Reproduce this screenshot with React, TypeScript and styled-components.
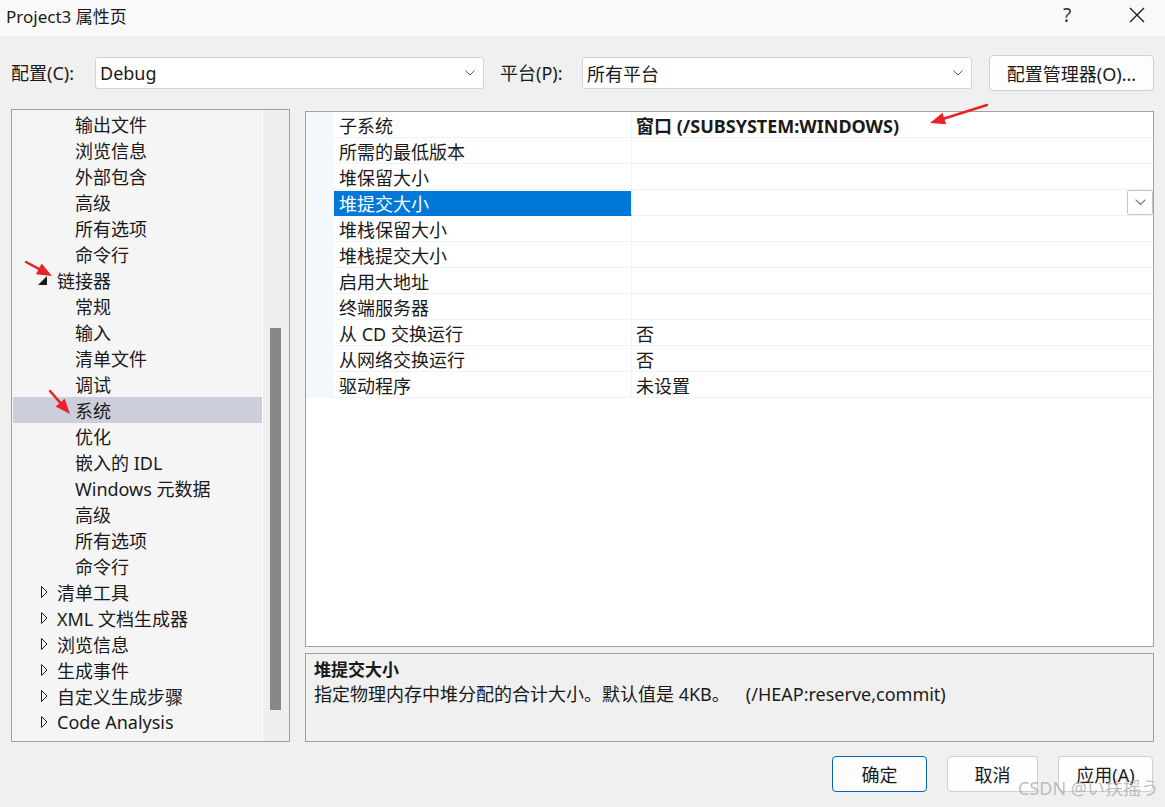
import React from "react";
import styled, { createGlobalStyle } from "styled-components";

const GlobalStyle = createGlobalStyle`
  html, body {
    margin: 0;
    padding: 0;
    background: #f0f0f0;
  }
  body {
    font-family: "Noto Sans", "Noto Sans CJK SC", sans-serif;
    color: #1a1a1a;
  }
  * {
    box-sizing: border-box;
  }
`;

const Window = styled.div`
  position: relative;
  width: 1165px;
  height: 807px;
  background: #f0f0f0;
  overflow: hidden;
  font-size: 18px;
`;

const TitleBar = styled.div`
  height: 36px;
  display: flex;
  align-items: center;
  justify-content: space-between;
  padding-left: 6px;
  background: #f9f9f9;
`;

const Title = styled.div`
  font-size: 17px;
  color: #1a1a1a;
  line-height: 1;
  margin-top: -4px;
`;

const TitleButtons = styled.div`
  display: flex;
  align-items: center;
  height: 100%;
`;

const TitleButton = styled.div<{ $width: number }>`
  width: ${(p) => p.$width}px;
  height: 100%;
  display: flex;
  align-items: center;
  justify-content: center;
  color: #333;
  font-size: 19px;
  margin-top: -6px;
`;

const ConfigRow = styled.div`
  display: flex;
  align-items: center;
  height: 36px;
  margin-top: 19px;
  padding-left: 11px;
`;

const FieldLabel = styled.div<{ $width: number }>`
  width: ${(p) => p.$width}px;
  font-size: 18px;
  line-height: 1;
`;

const Select = styled.div<{ $width: number }>`
  width: ${(p) => p.$width}px;
  height: 32px;
  background: #ffffff;
  border: 1px solid #d3d3d3;
  border-radius: 3px;
  display: flex;
  align-items: center;
  justify-content: space-between;
  padding: 0 8px 0 4px;
  font-size: 18px;
`;

const SelectGap = styled.div<{ $width: number }>`
  width: ${(p) => p.$width}px;
`;

const PushButton = styled.div<{ $width: number; $primary?: boolean }>`
  width: ${(p) => p.$width}px;
  height: 36px;
  background: #fdfdfd;
  border: 1px solid ${(p) => (p.$primary ? "#0067c0" : "#d0d0d0")};
  border-radius: 4px;
  display: flex;
  align-items: center;
  justify-content: center;
  font-size: 18px;
  color: #1a1a1a;
`;

const Main = styled.div`
  display: flex;
  gap: 15px;
  margin-top: 18px;
  padding-left: 11px;
  height: 633px;
`;

const TreeBox = styled.div`
  width: 279px;
  height: 633px;
  border: 1px solid #a0a0a0;
  display: flex;
  background: #f5f5f5;
`;

const TreeList = styled.div`
  flex: 1;
  padding: 1px 0 0 1px;
  border-right: 1px solid #ffffff;
`;

const TreeRow = styled.div<{ $level: number; $selected?: boolean }>`
  height: 26px;
  display: flex;
  align-items: center;
  padding-left: ${(p) => (p.$level === 1 ? 25 : 62)}px;
  background: ${(p) => (p.$selected ? "#cccedb" : "transparent")};
  font-size: 18px;
  white-space: nowrap;
`;

const Expander = styled.div`
  width: 19px;
  height: 26px;
  display: flex;
  align-items: center;
`;

const Scrollbar = styled.div`
  width: 26px;
  background: #efefef;
  padding: 218px 0 0 7px;
`;

const Thumb = styled.div`
  width: 11px;
  height: 382px;
  background: #878787;
`;

const RightColumn = styled.div`
  width: 849px;
  display: flex;
  flex-direction: column;
  gap: 6px;
  padding-top: 2px;
`;

const Grid = styled.div`
  height: 536px;
  background: #ffffff;
  border: 1px solid #a0a0a0;
`;

const GridRow = styled.div`
  display: flex;
  height: 26px;
`;

const Gutter = styled.div`
  width: 28px;
  background: #f4f7fc;
`;

const NameCell = styled.div<{ $selected?: boolean }>`
  width: 298px;
  display: flex;
  align-items: center;
  padding-left: 5px;
  border-bottom: 1px solid ${(p) => (p.$selected ? "#0078d7" : "#eff2f7")};
  border-top: 1px solid ${(p) => (p.$selected ? "#ffffff" : "transparent")};
  border-right: 1px solid #eff2f7;
  background: ${(p) => (p.$selected ? "#0078d7" : "#ffffff")};
  color: ${(p) => (p.$selected ? "#ffffff" : "#1a1a1a")};
  font-size: 18px;
  white-space: nowrap;
`;

const ValueCell = styled.div<{ $bold?: boolean }>`
  flex: 1;
  display: flex;
  align-items: center;
  justify-content: space-between;
  padding-left: 4px;
  border-bottom: 1px solid #eff2f7;
  font-size: 18px;
  font-weight: ${(p) => (p.$bold ? 700 : 400)};
  white-space: nowrap;
`;

const CellDrop = styled.div`
  width: 26px;
  height: 25px;
  border: 1px solid #c8c8c8;
  border-radius: 2px;
  background: #ffffff;
  display: flex;
  align-items: center;
  justify-content: center;
`;

const Description = styled.div`
  height: 89px;
  border: 1px solid #a0a0a0;
  background: #f0f0f0;
  padding: 5px 8px;
  display: flex;
  flex-direction: column;
  gap: 2px;
`;

const DescTitle = styled.div`
  font-weight: 700;
  font-size: 17px;
  line-height: 22px;
`;

const DescText = styled.div`
  font-size: 18px;
  line-height: 22px;
  white-space: nowrap;
  display: flex;
`;

const DescSwitch = styled.span`
  margin-left: 16px;
`;

const Footer = styled.div`
  display: flex;
  justify-content: flex-end;
  gap: 20px;
  margin-top: 14px;
  padding-right: 12px;
`;

const Watermark = styled.div`
  position: absolute;
  right: 6px;
  bottom: 7px;
  font-size: 18px;
  color: rgba(170, 170, 170, 0.75);
  font-family: "Noto Sans", "Noto Sans CJK JP", sans-serif;
  pointer-events: none;
`;

const ArrowLayer = styled.svg`
  position: absolute;
  left: 0;
  top: 0;
  pointer-events: none;
`;

const Chevron = ({ size = 10, color = "#606060" }: { size?: number; color?: string }) => (
  <svg width={size} height={size * 0.6} viewBox="0 0 10 6">
    <polyline points="0.5,0.5 5,5 9.5,0.5" fill="none" stroke={color} strokeWidth="1" />
  </svg>
);

const ExpandedIcon = () => (
  <svg width="9" height="9" viewBox="0 0 9 9" style={{ marginTop: 1 }}>
    <polygon points="9,0 9,9 0,9" fill="#1a1a1a" />
  </svg>
);

const CollapsedIcon = () => (
  <svg width="7" height="12" viewBox="0 0 7 12" style={{ marginLeft: 3 }}>
    <polygon points="0.5,0.5 6,6 0.5,11.5" fill="none" stroke="#1a1a1a" strokeWidth="1" />
  </svg>
);

type TreeItem = {
  label: string;
  level: number;
  state?: "open" | "closed";
  selected?: boolean;
};

const treeItems: TreeItem[] = [
  { label: "输出文件", level: 2 },
  { label: "浏览信息", level: 2 },
  { label: "外部包含", level: 2 },
  { label: "高级", level: 2 },
  { label: "所有选项", level: 2 },
  { label: "命令行", level: 2 },
  { label: "链接器", level: 1, state: "open" },
  { label: "常规", level: 2 },
  { label: "输入", level: 2 },
  { label: "清单文件", level: 2 },
  { label: "调试", level: 2 },
  { label: "系统", level: 2, selected: true },
  { label: "优化", level: 2 },
  { label: "嵌入的 IDL", level: 2 },
  { label: "Windows 元数据", level: 2 },
  { label: "高级", level: 2 },
  { label: "所有选项", level: 2 },
  { label: "命令行", level: 2 },
  { label: "清单工具", level: 1, state: "closed" },
  { label: "XML 文档生成器", level: 1, state: "closed" },
  { label: "浏览信息", level: 1, state: "closed" },
  { label: "生成事件", level: 1, state: "closed" },
  { label: "自定义生成步骤", level: 1, state: "closed" },
  { label: "Code Analysis", level: 1, state: "closed" },
];

type Prop = { name: string; value: string; bold?: boolean; selected?: boolean };

const props: Prop[] = [
  { name: "子系统", value: "窗口 (/SUBSYSTEM:WINDOWS)", bold: true },
  { name: "所需的最低版本", value: "" },
  { name: "堆保留大小", value: "" },
  { name: "堆提交大小", value: "", selected: true },
  { name: "堆栈保留大小", value: "" },
  { name: "堆栈提交大小", value: "" },
  { name: "启用大地址", value: "" },
  { name: "终端服务器", value: "" },
  { name: "从 CD 交换运行", value: "否" },
  { name: "从网络交换运行", value: "否" },
  { name: "驱动程序", value: "未设置" },
];

const RedArrow = ({ x1, y1, x2, y2 }: { x1: number; y1: number; x2: number; y2: number }) => {
  const ang = Math.atan2(y2 - y1, x2 - x1);
  const len = 15;
  const wing = 6;
  const bx = x2 - len * Math.cos(ang);
  const by = y2 - len * Math.sin(ang);
  const px = -Math.sin(ang) * wing;
  const py = Math.cos(ang) * wing;
  return (
    <g>
      <line x1={x1} y1={y1} x2={bx} y2={by} stroke="#e8232a" strokeWidth="2.5" strokeLinecap="round" />
      <polygon
        points={`${x2},${y2} ${bx + px},${by + py} ${bx - px},${by - py}`}
        fill="#e8232a"
      />
    </g>
  );
};

export default function App() {
  return (
    <>
      <GlobalStyle />
      <Window>
        <TitleBar>
          <Title>Project3 属性页</Title>
          <TitleButtons>
            <TitleButton $width={84}>?</TitleButton>
            <TitleButton $width={56}>
              <svg width="16" height="16" viewBox="0 0 16 16">
                <path d="M1 1 L15 15 M15 1 L1 15" stroke="#1a1a1a" strokeWidth="1.3" />
              </svg>
            </TitleButton>
          </TitleButtons>
        </TitleBar>

        <ConfigRow>
          <FieldLabel $width={84}>配置(C):</FieldLabel>
          <Select $width={389}>
            <span>Debug</span>
            <Chevron />
          </Select>
          <SelectGap $width={16} />
          <FieldLabel $width={82}>平台(P):</FieldLabel>
          <Select $width={390}>
            <span>所有平台</span>
            <Chevron />
          </Select>
          <SelectGap $width={17} />
          <PushButton $width={165}>配置管理器(O)...</PushButton>
        </ConfigRow>

        <Main>
          <TreeBox>
            <TreeList>
              {treeItems.map((item, i) => (
                <TreeRow key={i} $level={item.level} $selected={item.selected}>
                  {item.level === 1 && (
                    <Expander>
                      {item.state === "open" ? <ExpandedIcon /> : <CollapsedIcon />}
                    </Expander>
                  )}
                  {item.label}
                </TreeRow>
              ))}
            </TreeList>
            <Scrollbar>
              <Thumb />
            </Scrollbar>
          </TreeBox>

          <RightColumn>
            <Grid>
              {props.map((p, i) => (
                <GridRow key={i}>
                  <Gutter />
                  <NameCell $selected={p.selected}>{p.name}</NameCell>
                  <ValueCell $bold={p.bold}>
                    <span>{p.value}</span>
                    {p.selected && (
                      <CellDrop>
                        <Chevron size={11} color="#707070" />
                      </CellDrop>
                    )}
                  </ValueCell>
                </GridRow>
              ))}
            </Grid>
            <Description>
              <DescTitle>堆提交大小</DescTitle>
              <DescText>
                <span>指定物理内存中堆分配的合计大小。默认值是 4KB。</span>
                <DescSwitch>(/HEAP:reserve,commit)</DescSwitch>
              </DescText>
            </Description>
          </RightColumn>
        </Main>

        <Footer>
          <PushButton $width={95} $primary>确定</PushButton>
          <PushButton $width={91}>取消</PushButton>
          <PushButton $width={95}>应用(A)</PushButton>
        </Footer>

        <Watermark>CSDN @い扶摇う</Watermark>

        <ArrowLayer width="1165" height="807">
          <RedArrow x1={26} y1={262} x2={52} y2={276} />
          <RedArrow x1={50} y1={391} x2={70} y2={414} />
          <RedArrow x1={987} y1={105} x2={930} y2={123} />
        </ArrowLayer>
      </Window>
    </>
  );
}
